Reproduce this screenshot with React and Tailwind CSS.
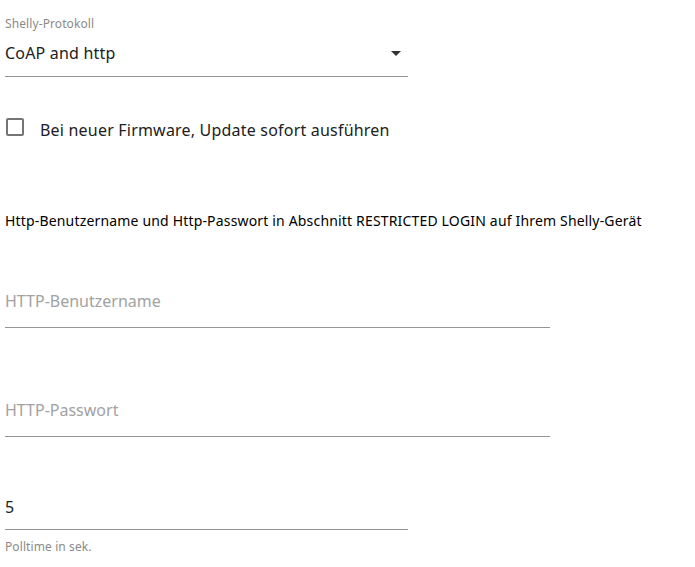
export default function App() {
  return (
    <div
      className="bg-white w-[695px] h-[567px] pl-[5px] text-[#212121]"
      style={{ fontFamily: '"Noto Sans", "Open Sans", sans-serif' }}
    >
      {/* Select */}
      <div className="w-[403px] pt-[16px]">
        <div className="text-[12px] leading-[16px] text-[#8a8a8a] tracking-[0.1px]">Shelly-Protokoll</div>
        <div className="mt-[12px] flex items-center justify-between pb-[13px] border-b border-[#949494]">
          <span className="text-[16px] leading-[19px] tracking-[0.2px]">CoAP and http</span>
          <svg width="10" height="5" viewBox="0 0 10 5" className="mr-[7px]">
            <path d="M0 0 L5 5 L10 0 Z" fill="#333" />
          </svg>
        </div>
      </div>

      {/* Checkbox */}
      <div className="mt-[38px] flex items-start">
        <div className="mt-[3px] ml-[1px] w-[18px] h-[18px] border-2 border-[#757575] rounded-[2px]" />
        <span className="mt-[3px] ml-[16px] text-[16px] leading-[24px] tracking-[0.2px]">
          Bei neuer Firmware, Update sofort ausführen
        </span>
      </div>

      {/* Info text */}
      <div className="mt-[69px] text-[14px] leading-[20px] text-black tracking-[0.17px]">
        Http-Benutzername und Http-Passwort in Abschnitt RESTRICTED LOGIN auf Ihrem Shelly-Gerät
      </div>

      {/* Username */}
      <div className="mt-[61px] w-[545px] pb-[16px] border-b border-[#949494]">
        <div className="text-[16px] leading-[19px] text-[#a2a2a2]">HTTP-Benutzername</div>
      </div>

      {/* Password */}
      <div className="mt-[73px] w-[545px] pb-[16px] border-b border-[#949494]">
        <div className="text-[16px] leading-[19px] text-[#a2a2a2]">HTTP-Passwort</div>
      </div>

      {/* Polltime */}
      <div className="mt-[61px] w-[403px] pb-[12px] border-b border-[#949494]">
        <div className="text-[16px] leading-[19px]">5</div>
      </div>
      <div className="mt-[9px] text-[12px] leading-[16px] text-[#8a8a8a] tracking-[0.1px]">Polltime in sek.</div>
    </div>
  );
}
